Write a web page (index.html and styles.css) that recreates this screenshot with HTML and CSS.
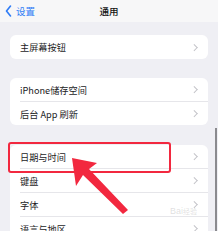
FILE: index.html
```html
<!DOCTYPE html>
<html>
<head>
<meta charset="utf-8">
<link rel="stylesheet" href="styles.css">
</head>
<body>
<div class="screen">
  <div class="nav">
    <div class="back">
      <svg class="back-icon" width="7" height="12" viewBox="0 0 7 12"><path d="M5.5 1 L1.5 6 L5.5 11" fill="none" stroke="#2f7cf6" stroke-width="1.6" stroke-linecap="round" stroke-linejoin="round"/></svg>
      <span>设置</span>
    </div>
    <div class="title">通用</div>
  </div>

  <div class="card card1">
    <div class="row"><span>主屏幕按钮</span><i class="chev"></i></div>
  </div>

  <div class="card card2">
    <div class="row"><span>iPhone储存空间</span><i class="chev"></i></div>
    <div class="row"><span>后台 App 刷新</span><i class="chev"></i></div>
  </div>

  <div class="card card3">
    <div class="row"><span>日期与时间</span><i class="chev"></i></div>
    <div class="row"><span>键盘</span><i class="chev"></i></div>
    <div class="row"><span>字体</span><i class="chev"></i></div>
    <div class="row"><span>语言与地区</span><i class="chev"></i></div>
  </div>

  <div class="highlight"></div>
  <div class="scrollbar"></div>
  <div class="watermark">Bai<span class="wm-small">经验</span></div>
  <svg class="arrow" width="218" height="231" viewBox="0 0 218 231">
    <polygon points="72,158 97,163 89,169 128,210 123,214 83,175 76,186" fill="#f2283f"/>
  </svg>
</div>
</body>
</html>
```

FILE: styles.css
```css
html, body {
  margin: 0;
  padding: 0;
}
body {
  width: 218px;
  height: 231px;
  overflow: hidden;
  background: #efeff4;
  font-family: "Noto Sans CJK SC", "Noto Sans", sans-serif;
  color: #1c1c1e;
}
.screen {
  position: relative;
  width: 218px;
  height: 231px;
  overflow: hidden;
}
.nav {
  height: 22px;
  background: #f7f7f8;
  position: relative;
  display: flex;
  align-items: center;
  justify-content: center;
}
.back {
  position: absolute;
  left: 5px;
  top: 5px;
  display: flex;
  align-items: center;
  gap: 4px;
  color: #2f7cf6;
  font-size: 9.5px;
  line-height: 12px;
}
.back-icon {
  display: block;
}
.title {
  font-size: 9.5px;
  font-weight: 500;
  color: #111;
  line-height: 12px;
}
.card {
  background: #ffffff;
  margin: 0 10px;
  border-radius: 6px;
  overflow: hidden;
}
.card1 {
  margin-top: 13px;
}
.card2 {
  margin-top: 19px;
}
.card3 {
  margin-top: 20px;
}
.row {
  height: 23px;
  display: flex;
  align-items: center;
  justify-content: space-between;
  padding: 0 11px 0 10px;
  font-size: 9.2px;
  position: relative;
}
.card1 .row {
  height: 24px;
}
.row + .row {
  border-top: 1px solid #e6e6ea;
  margin-left: 10px;
  padding-left: 0;
}
.chev {
  display: block;
  width: 3.5px;
  height: 3.5px;
  border-top: 1px solid #c3c3c8;
  border-right: 1px solid #c3c3c8;
  transform: rotate(45deg);
  margin-right: 1px;
}
.highlight {
  position: absolute;
  left: 8px;
  top: 142px;
  width: 159px;
  height: 27px;
  border: 2px solid #f2283f;
  border-radius: 3px;
}
.scrollbar {
  position: absolute;
  left: 215px;
  top: 128px;
  width: 1.5px;
  height: 103px;
  background: #8a8a8e;
}
.watermark {
  position: absolute;
  left: 170px;
  top: 206px;
  font-family: "Liberation Sans", sans-serif;
  font-size: 9px;
  color: rgba(150, 150, 150, 0.3);
}
.wm-small {
  font-family: "Noto Sans CJK SC", sans-serif;
  font-size: 7px;
}
.arrow {
  position: absolute;
  left: 0;
  top: 0;
}
```
